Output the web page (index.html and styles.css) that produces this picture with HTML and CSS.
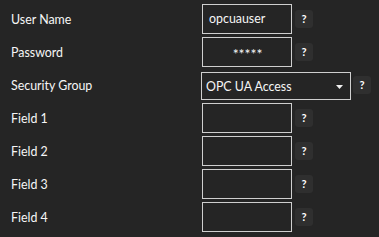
FILE: index.html
```html
<!DOCTYPE html>
<html>
<head>
<meta charset="utf-8">
<link rel="stylesheet" href="styles.css">
</head>
<body>
<div class="form">
  <div class="row">
    <div class="label">User Name</div>
    <div class="box">opcuauser</div>
    <div class="help">?</div>
  </div>
  <div class="row">
    <div class="label">Password</div>
    <div class="box pw">*****</div>
    <div class="help">?</div>
  </div>
  <div class="row">
    <div class="label">Security Group</div>
    <div class="select">
      <span>OPC UA Access</span>
      <svg class="caret" width="7" height="4" viewBox="0 0 7 4"><path d="M0 0H7L3.5 4Z" fill="#f0f0f0"/></svg>
    </div>
    <div class="help sel">?</div>
  </div>
  <div class="row">
    <div class="label">Field 1</div>
    <div class="box"></div>
    <div class="help">?</div>
  </div>
  <div class="row">
    <div class="label">Field 2</div>
    <div class="box"></div>
    <div class="help">?</div>
  </div>
  <div class="row">
    <div class="label">Field 3</div>
    <div class="box"></div>
    <div class="help">?</div>
  </div>
  <div class="row">
    <div class="label">Field 4</div>
    <div class="box"></div>
    <div class="help">?</div>
  </div>
</div>
</body>
</html>
```
FILE: styles.css
```css
html, body {
  margin: 0;
  padding: 0;
  background: #252525;
}
body {
  font-family: Lato, "Open Sans", sans-serif;
  font-size: 12.4px;
  color: #f6f6f6;
}
.form {
  display: flex;
  flex-direction: column;
  gap: 3px;
  padding: 4px 0 0 11px;
}
.row {
  display: flex;
  align-items: flex-start;
  height: 30px;
}
.label {
  width: 191px;
  line-height: 31px;
  flex: none;
}
.box {
  box-sizing: border-box;
  width: 90px;
  height: 30px;
  border: 1px solid #cfcfcf;
  line-height: 28px;
  padding-left: 6px;
  flex: none;
}
.box.pw {
  padding-left: 1px;
  text-align: center;
  font-size: 14px;
  line-height: 31px;
}
.select {
  box-sizing: border-box;
  width: 150px;
  height: 28px;
  margin-top: 2px;
  margin-left: -1px;
  border: 1px solid #cfcfcf;
  display: flex;
  align-items: center;
  justify-content: space-between;
  padding: 1px 7px 0 4px;
  flex: none;
}
.caret {
  display: block;
  margin-top: 0;
}
.help {
  width: 18px;
  height: 18px;
  margin-top: 6px;
  margin-left: 3px;
  border-radius: 3px;
  background: #2f2f2f;
  font-size: 11px;
  font-weight: 700;
  line-height: 18px;
  text-align: center;
  color: #ffffff;
  flex: none;
}
.help.sel {
  margin-left: 2px;
}
```
